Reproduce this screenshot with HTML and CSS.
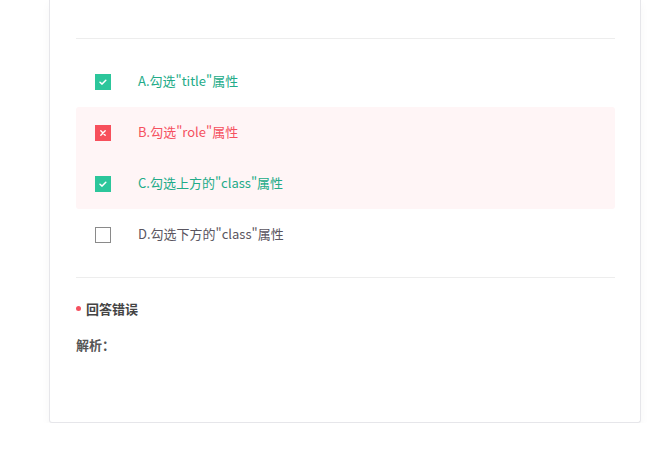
FILE: index.html
```html
<!DOCTYPE html>
<html lang="zh">
<head>
<meta charset="utf-8">
<link rel="stylesheet" href="styles.css">
</head>
<body>
<div class="card">
  <div class="divider"></div>
  <div class="options">
    <div class="opt ok">
      <span class="box box-ok"><svg viewBox="0 0 16 16" width="16" height="16"><path d="M5 8.2 L7.1 10.1 L10.8 6.2" fill="none" stroke="#fff" stroke-width="1.5" stroke-linecap="round" stroke-linejoin="round"/></svg></span>
      <span class="label">A.勾选"title"属性</span>
    </div>
    <div class="wrongset">
      <div class="opt bad">
        <span class="box box-bad"><svg viewBox="0 0 16 16" width="16" height="16"><path d="M5.8 5.8 L10.2 10.2 M10.2 5.8 L5.8 10.2" fill="none" stroke="#fff" stroke-width="1.4" stroke-linecap="round"/></svg></span>
        <span class="label">B.勾选"role"属性</span>
      </div>
      <div class="opt ok">
        <span class="box box-ok"><svg viewBox="0 0 16 16" width="16" height="16"><path d="M5 8.2 L7.1 10.1 L10.8 6.2" fill="none" stroke="#fff" stroke-width="1.5" stroke-linecap="round" stroke-linejoin="round"/></svg></span>
        <span class="label">C.勾选上方的"class"属性</span>
      </div>
    </div>
    <div class="opt plain">
      <span class="box box-empty"></span>
      <span class="label">D.勾选下方的"class"属性</span>
    </div>
  </div>
  <div class="divider"></div>
  <div class="result"><span class="dot"></span>回答错误</div>
  <div class="analysis">解析：</div>
</div>
</body>
</html>
```
FILE: styles.css
```css
html, body {
  margin: 0;
  padding: 0;
  background: #fff;
  font-family: "Noto Sans CJK SC", "Noto Sans", sans-serif;
}
.card {
  margin-left: 49px;
  width: 539px;
  padding: 38px 25px 0 26px;
  height: 384px;
  border: 1px solid #e6e6ea;
  border-top: none;
  border-radius: 0 0 3px 3px;
  box-shadow: 0 4px 10px rgba(0,0,0,0.04);
  box-sizing: content-box;
  background: #fff;
}
.divider {
  height: 1px;
  background: #ededed;
}
.options {
  padding: 17px 0 17px;
}
.wrongset {
  background: #fff5f6;
  border-radius: 3px;
}
.opt {
  height: 51px;
  display: flex;
  align-items: center;
  padding-left: 19px;
  font-size: 13px;
}
.box {
  width: 16px;
  height: 16px;
  box-sizing: border-box;
  display: flex;
  margin-right: 27px;
  flex: none;
}
.box-ok { background: #2cc69b; }
.box-bad { background: #f7505c; }
.box-empty { border: 1.5px solid #8a8a8a; background: #fff; }
.ok .label { color: #22ab88; }
.bad .label { color: #f5515f; }
.plain .label { color: #5a5560; }
.label { line-height: 16px; margin-top: -1px; }
.result {
  margin-top: 20px;
  display: flex;
  align-items: center;
  font-size: 13px;
  font-weight: bold;
  color: #444;
  height: 20px;
}
.dot {
  width: 5px;
  height: 5px;
  border-radius: 50%;
  background: #f5515f;
  margin: 0 5px 0 0;
}
.analysis {
  margin-top: 17px;
  font-size: 13px;
  font-weight: bold;
  color: #555;
  height: 20px;
  line-height: 20px;
}
```
